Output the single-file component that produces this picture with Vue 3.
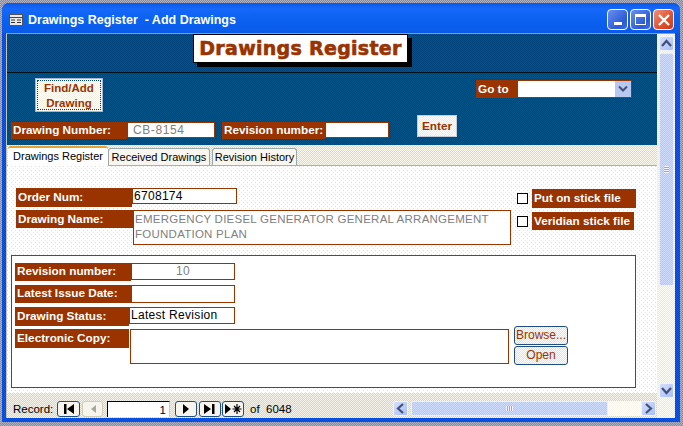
<script setup>
const tabs = [
  { name: 'Drawings Register', cls: 'tab-active' },
  { name: 'Received Drawings', cls: 'tab-second' },
  { name: 'Revision History', cls: 'tab-third' }
]
</script>

<template>
  <div class="window">
    <div class="titlebar">
      <svg class="app-icon" width="14" height="12" viewBox="0 0 14 12">
        <rect x="0.5" y="0.5" width="13" height="11" fill="#e8e8e8" stroke="#555" />
        <path d="M0 3.5h14" stroke="#444" />
        <path d="M2 6h4M8 6h4M2 8.500h4M8 8.500h4" stroke="#333" />
      </svg>
      <span class="title-text">Drawings Register&nbsp; - Add Drawings</span>
      <div class="win-buttons">
        <div class="win-btn">
          <span class="min-glyph"></span>
        </div>
        <div class="win-btn">
          <span class="max-glyph"></span>
        </div>
        <div class="win-btn win-close">
          <svg width="14" height="14" viewBox="0 0 14 14">
            <path d="M2 2l10 10M12 2L2 12" stroke="#fff" stroke-width="2.400" />
          </svg>
        </div>
      </div>
    </div>

    <div class="client">
      <div class="form-col">
        <div class="form-head">
          <div class="logo-box">Drawings Register</div>
        </div>

        <div class="find-section">
          <div class="find-row">
            <div class="find-btn"><span>Find/Add<br />Drawing</span></div>
            <div class="goto">
              <span class="goto-label">Go to</span>
              <div class="goto-select">
                <div class="goto-arrow">
                  <svg width="10" height="8" viewBox="0 0 10 8">
                    <path d="M1 1.500l4 4 4-4" fill="none" stroke="#44507a" stroke-width="2" />
                  </svg>
                </div>
              </div>
            </div>
          </div>
          <div class="number-row">
            <div class="brown-label num-label">Drawing Number:</div>
            <div class="field num-input">CB-8154</div>
            <div class="brown-label rev-label">Revision number:</div>
            <div class="field rev-input"></div>
            <div class="enter-btn">Enter</div>
          </div>
        </div>

        <div class="tab-strip">
          <div v-for="tab in tabs" :key="tab.name" class="tab" :class="tab.cls">{{ tab.name }}</div>
        </div>

        <div class="detail">
          <div class="top-fields">
            <div class="top-left">
              <div class="row order-row">
                <div class="brown-label order-label">Order Num:</div>
                <div class="field order-input">6708174</div>
              </div>
              <div class="row name-row">
                <div class="brown-label name-label">Drawing Name:</div>
                <div class="field name-input">EMERGENCY DIESEL GENERATOR GENERAL ARRANGEMENT FOUNDATION PLAN</div>
              </div>
            </div>
            <div class="checks">
              <div class="check-row">
                <span class="checkbox"></span>
                <span class="brown-label stick-one">Put on stick file</span>
              </div>
              <div class="check-row">
                <span class="checkbox"></span>
                <span class="brown-label stick-two">Veridian stick file</span>
              </div>
            </div>
          </div>

          <div class="rev-panel">
            <div class="panel-row">
              <div class="brown-label wide-label">Revision number:</div>
              <div class="field panel-center">10</div>
            </div>
            <div class="panel-row">
              <div class="brown-label wide-label">Latest Issue Date:</div>
              <div class="field panel-input"></div>
            </div>
            <div class="panel-row">
              <div class="brown-label status-label">Drawing Status:</div>
              <div class="field status-input">Latest Revision</div>
            </div>
            <div class="panel-row">
              <div class="brown-label copy-label">Electronic Copy:</div>
              <div class="field copy-input"></div>
              <div class="file-btns">
                <div class="file-btn">Browse...</div>
                <div class="file-btn">Open</div>
              </div>
            </div>
          </div>
        </div>

        <div class="statusbar">
          <span class="record-label">Record:</span>
          <div class="nav-btn nav-first">
            <svg width="18" height="14" viewBox="0 0 18 14"><path d="M4 2h2.500v10H4zM14 2v10L7 7z" fill="#000" /></svg>
          </div>
          <div class="nav-btn nav-prev">
            <svg width="18" height="14" viewBox="0 0 18 14"><path d="M12 3v8L7 7z" fill="#a8a89c" /></svg>
          </div>
          <div class="record-input">1</div>
          <div class="nav-btn nav-next">
            <svg width="20" height="14" viewBox="0 0 20 14"><path d="M7 2v10l6-5z" fill="#000" /></svg>
          </div>
          <div class="nav-btn nav-last">
            <svg width="20" height="14" viewBox="0 0 20 14"><path d="M4 2v10l7-5zM12 2h2.500v10H12z" fill="#000" /></svg>
          </div>
          <div class="nav-btn nav-new">
            <svg width="20" height="14" viewBox="0 0 20 14">
              <path d="M2 2v10l6-5z" fill="#000" />
              <path d="M14 2v10M9.500 7h9M11 4l6 6M17 4l-6 6" stroke="#000" stroke-width="1.200" />
            </svg>
          </div>
          <span class="of-text">of</span>
          <span class="total-text">6048</span>
          <div class="hscroll">
            <div class="sb-btn">
              <svg width="9" height="11" viewBox="0 0 9 11"><path d="M7 1L2 5.500 7 10" fill="none" stroke="#44507a" stroke-width="2.200" /></svg>
            </div>
            <div class="h-thumb"><span class="grip-v"></span></div>
            <div class="h-track"></div>
            <div class="sb-btn">
              <svg width="9" height="11" viewBox="0 0 9 11"><path d="M2 1l5 4.500L2 10" fill="none" stroke="#44507a" stroke-width="2.200" /></svg>
            </div>
          </div>
        </div>
      </div>

      <div class="vscroll">
        <div class="sb-btn v-btn">
          <svg width="11" height="9" viewBox="0 0 11 9"><path d="M1 7l4.500-5L10 7" fill="none" stroke="#44507a" stroke-width="2.200" /></svg>
        </div>
        <div class="v-thumb"><span class="grip-h"></span></div>
        <div class="v-track"></div>
        <div class="sb-btn v-btn">
          <svg width="11" height="9" viewBox="0 0 11 9"><path d="M1 2l4.500 5L10 2" fill="none" stroke="#44507a" stroke-width="2.200" /></svg>
        </div>
        <div class="v-foot"></div>
      </div>
    </div>
  </div>
</template>

<style>
html, body {
  margin: 0;
  height: 100%;
  overflow: hidden;
  background: repeating-conic-gradient(#8288ac 0 25%, #b0b2c2 0 50%) 0 0 / 2px 2px;
}
</style>

<style scoped>
.window {
  box-sizing: border-box;
  width: 678px;
  height: 419px;
  margin: 3px 0 0 2px;
  display: flex;
  flex-direction: column;
  border-radius: 7px 7px 0 0;
  font-family: "Liberation Sans", Arial, sans-serif;
  background: repeating-conic-gradient(#0046d8 0 25%, #0a5cf0 0 50%) 0 0 / 2px 2px;
  padding: 0 5px 4px 4px;
  overflow: hidden;
}
.titlebar {
  height: 30px;
  flex: none;
  display: flex;
  align-items: center;
  margin: 0 -5px 0 -4px;
  padding: 3px 6px 0 7px;
  box-sizing: border-box;
  background: linear-gradient(#0a58e8, #1668f8 18%, #0a60f0 60%, #0a5ae8);
}
.app-icon {
  margin-right: 5px;
}
.title-text {
  color: #fff;
  font: bold 12.500px "Liberation Sans", Arial, sans-serif;
  white-space: nowrap;
}
.win-buttons {
  margin-left: auto;
  display: flex;
  gap: 2px;
}
.win-btn {
  box-sizing: border-box;
  width: 21px;
  height: 21px;
  border: 1px solid #fff;
  border-radius: 4px;
  background: linear-gradient(135deg, #6a90ea, #2c5ad8 70%, #3f6de0);
  display: flex;
  align-items: center;
  justify-content: center;
}
.win-close {
  background: linear-gradient(135deg, #f09078, #e0502c 60%, #c83a18);
}
.min-glyph {
  width: 8px;
  height: 3px;
  background: #fff;
  margin-top: 7px;
}
.max-glyph {
  box-sizing: border-box;
  width: 11px;
  height: 11px;
  border: 1px solid #fff;
  border-top-width: 3px;
}
.client {
  flex: 1;
  min-height: 0;
  display: flex;
  border-top: 1px solid #a09a88;
  border-left: 1px solid #c8c4a8;
  background: #fff;
}
.form-col {
  width: 650px;
  flex: none;
  display: flex;
  flex-direction: column;
}
.form-head {
  height: 38px;
  border-bottom: 1px solid #001018;
  background: repeating-conic-gradient(#00427c 0 25%, #005488 0 50%) 0 0 / 2px 2px;
  padding-left: 186px;
}
.logo-box {
  box-sizing: border-box;
  width: 215px;
  height: 29px;
  background: #fff;
  border: 1px solid #000;
  box-shadow: 4px 4px 0 #000;
  color: #993300;
  font: bold 19px "DejaVu Sans", sans-serif;
  -webkit-text-stroke: 0.6px #993300;
  letter-spacing: 0.3px;
  text-align: center;
  line-height: 26px;
  white-space: nowrap;
}
.find-section {
  height: 72px;
  box-sizing: border-box;
  padding-top: 5px;
  background: repeating-conic-gradient(#00427c 0 25%, #005488 0 50%) 0 0 / 2px 2px;
}
.find-row {
  height: 34px;
  display: flex;
  align-items: flex-start;
  padding-left: 28px;
  margin-bottom: 3px;
}
.find-btn {
  box-sizing: border-box;
  width: 68px;
  height: 34px;
  padding: 2px;
  border: 1px solid #a8b4d8;
  background: repeating-conic-gradient(#f2efe4 0 25%, #fff 0 50%) 0 0 / 2px 2px;
  color: #993300;
  font-size: 11.500px;
  font-weight: bold;
  line-height: 15px;
  text-align: center;
}
.find-btn span {
  display: block;
  height: 100%;
  outline: 1px dotted #004080;
}
.goto {
  margin-left: auto;
  margin-right: 25px;
  margin-top: 2px;
  display: flex;
  height: 18px;
  background: #993300;
  padding: 1px;
  box-sizing: border-box;
}
.goto-label {
  width: 41px;
  color: #fff;
  font-size: 11.750px;
  font-weight: bold;
  line-height: 16px;
  padding-left: 1px;
}
.goto-select {
  width: 113px;
  background: #fff;
  display: flex;
  justify-content: flex-end;
  margin-left: -1px;
}
.goto-arrow {
  width: 16px;
  background: #b8c8f0;
  display: flex;
  align-items: center;
  justify-content: center;
}
.number-row {
  display: flex;
  align-items: flex-start;
  padding-left: 4px;
}
.brown-label {
  box-sizing: border-box;
  background: #993300;
  color: #fff;
  font-size: 11.750px;
  font-weight: bold;
  white-space: nowrap;
  padding-left: 2px;
}
.field {
  box-sizing: border-box;
  background: #fff;
  border: 1px solid #993300;
  font-size: 12px;
  color: #000;
  letter-spacing: 0.3px;
  line-height: 14px;
  padding-left: 1px;
}
.num-label {
  width: 116px;
  height: 17px;
  margin-top: 7px;
  line-height: 15px;
}
.num-input {
  width: 88px;
  height: 16px;
  margin-top: 7px;
  color: #808080;
  font-weight: normal;
  letter-spacing: 0.6px;
  padding-left: 5px;
}
.rev-label {
  width: 103px;
  height: 17px;
  margin: 7px 0 0 7px;
  line-height: 15px;
}
.rev-input {
  width: 64px;
  height: 16px;
  margin-top: 7px;
}
.enter-btn {
  box-sizing: border-box;
  width: 40px;
  height: 22px;
  margin-left: 28px;
  background: repeating-conic-gradient(#ece9e0 0 25%, #fff 0 50%) 0 0 / 2px 2px;
  border: 1px solid #c8ccd8;
  color: #993300;
  font-size: 11.750px;
  font-weight: bold;
  text-align: center;
  line-height: 20px;
}
.tab-strip {
  height: 21px;
  box-sizing: border-box;
  padding-left: 1px;
  display: flex;
  align-items: flex-start;
  border-bottom: 1px solid #a8b0b0;
  background: repeating-conic-gradient(#e2d8bc 0 25%, #fbf8ee 0 50%) 0 0 / 2px 2px;
}
.tab {
  box-sizing: border-box;
  height: 17px;
  margin-top: 3px;
  border: 1px solid #9aa8a8;
  border-bottom: none;
  border-radius: 3px 3px 0 0;
  background: #f8f6ee;
  font: 11px "Liberation Sans", Arial, sans-serif;
  color: #000;
  text-align: center;
  line-height: 17px;
  white-space: nowrap;
}
.tab-active {
  width: 100px;
  height: 21px;
  margin-top: 1px;
  background: #fff;
  border: none;
  border-top: 2px solid #e8a030;
  line-height: 16px;
}
.tab-second {
  width: 102px;
}
.tab-third {
  width: 85px;
  margin-left: 2px;
}
.detail {
  flex: 1;
  min-height: 0;
  background-color: #fff;
  background-image:
    conic-gradient(from 270deg at 1px 1px, #dcdcf0 25%, transparent 0),
    conic-gradient(from 270deg at 1px 1px, #e4e2f0 25%, transparent 0);
  background-size: 4px 4px;
  background-position: 0 0, 2px 2px;
  padding-top: 22px;
}
.top-fields {
  display: flex;
  padding-left: 9px;
}
.top-left {
  width: 495px;
}
.row {
  display: flex;
  align-items: flex-start;
}
.order-row {
  margin-bottom: 3px;
}
.order-label {
  width: 116px;
  height: 19px;
  line-height: 17px;
}
.order-input {
  width: 105px;
  height: 16px;
}
.name-label {
  width: 117px;
  height: 18px;
  line-height: 17px;
}
.name-input {
  width: 378px;
  height: 35px;
  color: #808080;
  font-size: 11.500px;
  line-height: 15px;
  letter-spacing: 0.25px;
  padding: 1px 0 0 1px;
}
.checks {
  margin-left: 6px;
  margin-top: 1px;
}
.check-row {
  display: flex;
  align-items: center;
  margin-bottom: 4px;
}
.checkbox {
  box-sizing: border-box;
  width: 11px;
  height: 11px;
  border: 1px solid #000;
  background: #fff;
  margin-right: 4px;
}
.stick-one {
  width: 104px;
  height: 19px;
  line-height: 17px;
}
.stick-two {
  width: 102px;
  height: 18px;
  line-height: 17px;
}
.rev-panel {
  box-sizing: border-box;
  width: 625px;
  height: 133px;
  margin: 10px 0 0 4px;
  padding: 7px 0 0 3px;
  background: #fff;
  border: 1px solid #993300;
  display: flex;
  flex-direction: column;
  gap: 4px;
}
.panel-row {
  height: 18px;
  display: flex;
  align-items: flex-start;
}
.wide-label {
  width: 116px;
  height: 18px;
  line-height: 16px;
}
.panel-center {
  width: 104px;
  height: 17px;
  color: #808080;
  text-align: center;
  padding: 0;
}
.panel-input {
  width: 104px;
  height: 18px;
}
.status-label {
  width: 114px;
  height: 19px;
  line-height: 17px;
}
.status-input {
  width: 106px;
  height: 17px;
}
.copy-label {
  width: 114px;
  height: 19px;
  line-height: 17px;
}
.copy-input {
  width: 379px;
  height: 35px;
  margin-left: 1px;
}
.file-btns {
  margin: -3px 0 0 5px;
  display: flex;
  flex-direction: column;
  gap: 1px;
}
.file-btn {
  box-sizing: border-box;
  width: 54px;
  height: 19px;
  border: 1px solid #1f4f80;
  border-radius: 3px;
  background: repeating-conic-gradient(#e4e0d4 0 25%, #fff 0 50%) 0 0 / 2px 2px;
  color: #993300;
  font-size: 12px;
  text-align: center;
  line-height: 17px;
}
.statusbar {
  height: 25px;
  flex: none;
  box-sizing: border-box;
  padding: 8px 0 0 6px;
  display: flex;
  align-items: flex-start;
  font-size: 11.500px;
  color: #000;
  background: repeating-conic-gradient(#d8d4c0 0 25%, #f6f4ea 0 50%) 0 0 / 2px 2px;
}
.record-label {
  width: 44px;
  line-height: 16px;
}
.nav-btn {
  box-sizing: border-box;
  width: 23px;
  height: 16px;
  border: 1px solid #1f4f80;
  border-radius: 3px;
  background: #f6f4ec;
  display: flex;
  align-items: center;
  justify-content: center;
}
.nav-prev {
  border-color: #d0ccb8;
  margin-left: 2px;
  width: 21px;
}
.record-input {
  box-sizing: border-box;
  width: 63px;
  height: 16px;
  margin: 0 5px 0 4px;
  background: #fff;
  border-top: 1px solid #000;
  border-left: 1px solid #000;
  border-right: 1px solid #d0ccb8;
  text-align: right;
  padding-right: 3px;
  line-height: 17px;
}
.nav-next {
  width: 22px;
  margin-right: 2px;
}
.nav-last {
  width: 22px;
  margin-right: 1px;
}
.nav-new {
  width: 22px;
}
.of-text {
  margin-left: 6px;
  width: 16px;
  line-height: 16px;
}
.total-text {
  width: 127px;
  line-height: 16px;
}
.hscroll {
  width: 263px;
  height: 15px;
  display: flex;
  align-items: stretch;
}
.sb-btn {
  box-sizing: border-box;
  width: 15px;
  height: 15px;
  flex: none;
  background: linear-gradient(135deg, #d4e0fc, #a8bef4);
  border: 1px solid #eef2fc;
  border-radius: 2px;
  display: flex;
  align-items: center;
  justify-content: center;
}
.h-thumb {
  box-sizing: border-box;
  width: 197px;
  margin-left: 3px;
  background: repeating-conic-gradient(#b4c8f8 0 25%, #d0dcfc 0 50%) 0 0 / 2px 2px;
  border: 1px solid #e8eefc;
  border-radius: 2px;
  display: flex;
  align-items: center;
  justify-content: center;
}
.grip-v {
  width: 7px;
  height: 5px;
  background: repeating-linear-gradient(90deg, #f2f5ff 0 1px, #94a8e0 1px 2px);
}
.h-track {
  flex: 1;
  background: repeating-conic-gradient(#f8f6ec 0 25%, #fff 0 50%) 0 0 / 2px 2px;
}
.vscroll {
  flex: 1;
  min-width: 0;
  display: flex;
  flex-direction: column;
  padding: 2px 0 0 1px;
  background: repeating-conic-gradient(#ece8d8 0 25%, #fdfcf6 0 50%) 0 0 / 2px 2px;
  border-left: 1px solid #f0f0f0;
}
.v-btn {
  width: 15px;
}
.v-thumb {
  box-sizing: border-box;
  width: 15px;
  height: 233px;
  margin-top: 2px;
  background: repeating-conic-gradient(#b4c8f8 0 25%, #d0dcfc 0 50%) 0 0 / 2px 2px;
  border: 1px solid #e8eefc;
  border-radius: 2px;
  display: flex;
  align-items: center;
  justify-content: center;
}
.grip-h {
  width: 5px;
  height: 7px;
  background: repeating-linear-gradient(0deg, #f2f5ff 0 1px, #94a8e0 1px 2px);
}
.v-track {
  height: 97px;
  flex: none;
}
.v-foot {
  flex: 1;
}
</style>
